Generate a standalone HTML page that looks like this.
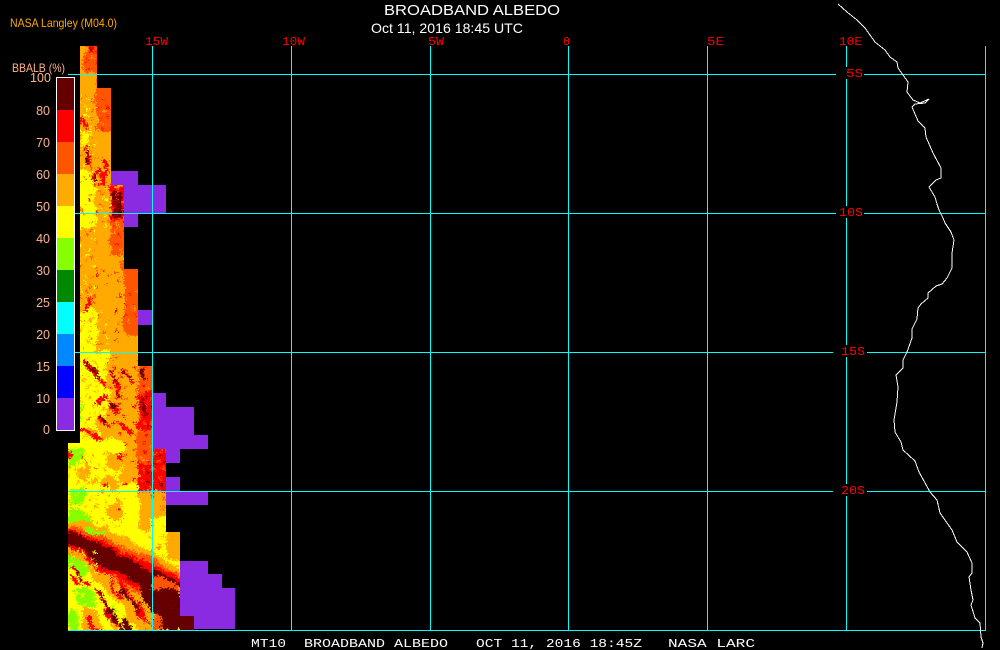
<!DOCTYPE html>
<html lang="en"><head><meta charset="utf-8"><title>Broadband Albedo</title>
<style>html,body{margin:0;padding:0;background:#000;width:1000px;height:650px;overflow:hidden}svg{display:block}
text{font-family:"Liberation Sans",sans-serif}
.r{fill:#ff0000;font-size:12px;font-family:"Liberation Mono",monospace}
.c{fill:#ffb38a;font-size:12.5px;text-anchor:end;font-family:"Liberation Sans",sans-serif}
.f{fill:#fff;font-size:11.5px;font-family:"Liberation Mono",monospace}
</style></head><body>
<svg width="1000" height="650" viewBox="0 0 1000 650" xmlns="http://www.w3.org/2000/svg">
<defs>
<clipPath id="heat"><path d="M80 46H97V88H111V185H124V269H138V366H152V449H166V532H180V616H194V630H68V443H80Z"/></clipPath>
<filter id="n" filterUnits="userSpaceOnUse" x="50" y="30" width="200" height="610" color-interpolation-filters="sRGB">
<feTurbulence type="fractalNoise" baseFrequency="0.07" numOctaves="2" seed="4" result="t1"/>
<feDisplacementMap in="SourceGraphic" in2="t1" scale="12" xChannelSelector="R" yChannelSelector="G" result="d1"/>
<feTurbulence type="fractalNoise" baseFrequency="0.55" numOctaves="1" seed="9" result="t2"/>
<feDisplacementMap in="d1" in2="t2" scale="9" xChannelSelector="G" yChannelSelector="R"/>
</filter>
<pattern id="sy" width="28" height="28" patternUnits="userSpaceOnUse"><path fill="#ffaa00" d="M2 3h3v2h-3zM12 1h2v3h-2zM20 6h4v2h-4zM6 12h2v2h-2zM16 14h3v3h-3zM25 17h2v2h-2zM3 22h4v1h-4zM11 24h2v2h-2zM21 23h2v3h-2z"/><path fill="#ff5500" d="M8 6h1v2h-1zM17 15h1v1h-1zM24 12h2v1h-2zM13 19h1v2h-1zM4 26h2v1h-2z"/><path fill="#f00" d="M22 2h1v1h-1zM9 17h1v1h-1zM1 14h1v1h-1z"/></pattern>
<pattern id="sa" width="28" height="28" patternUnits="userSpaceOnUse"><path fill="#ffff00" d="M1 2h3v2h-3zM10 5h2v2h-2zM19 1h2v3h-2zM24 9h2v2h-2zM5 14h3v2h-3zM15 12h2v1h-2zM21 19h3v2h-3zM2 23h2v3h-2zM12 21h3v2h-3z"/><path fill="#ff5500" d="M6 4h2v3h-2zM15 7h3v2h-3zM1 9h2v2h-2zM10 16h3v3h-3zM25 14h2v2h-2zM17 24h3v2h-3zM7 25h2v2h-2z"/><path fill="#f00" d="M7 5h1v1h-1zM16 8h1v1h-1zM11 17h1v1h-1zM18 25h1v1h-1z"/></pattern>
<pattern id="so" width="28" height="28" patternUnits="userSpaceOnUse"><path fill="#f00" d="M3 2h2v3h-2zM12 6h3v2h-3zM22 3h2v2h-2zM7 13h2v3h-2zM18 15h3v2h-3zM2 21h3v2h-3zM12 23h2v3h-2zM24 22h2v2h-2z"/><path fill="#ffaa00" d="M8 1h3v2h-3zM17 9h2v3h-2zM26 11h2v2h-2zM1 10h3v2h-3zM13 18h2v2h-2zM20 25h3v2h-3zM6 25h2v2h-2z"/></pattern>
<pattern id="sr" width="28" height="28" patternUnits="userSpaceOnUse"><path fill="#ff5500" d="M1 1h4v3h-4zM11 4h4v3h-4zM21 1h3v4h-3zM6 11h4v3h-4zM17 12h5v2h-5zM2 20h3v4h-3zM12 19h3v5h-3zM23 21h4v3h-4z"/><path fill="#600" d="M7 3h2v3h-2zM19 7h2v2h-2zM12 14h2v3h-2zM25 14h1v3h-1zM7 22h2v2h-2z"/></pattern>
<pattern id="sl" width="20" height="20" patternUnits="userSpaceOnUse"><path fill="#ffff00" d="M2 2h3v3h-3zM12 1h3v2h-3zM8 8h3v2h-3zM16 11h3v3h-3zM3 14h3v3h-3zM12 16h2v2h-2z"/></pattern>
<pattern id="sb" width="12" height="12" patternUnits="userSpaceOnUse"><path fill="#000" d="M3 2h1v2h-1zM9 7h1v1h-1zM1 9h1v1h-1z"/></pattern>
</defs>
<rect width="1000" height="650" fill="#000"/>
<!-- purple -->
<g fill="#8a2be2" shape-rendering="crispEdges">
<path d="M110 171h28v14h28v28h-28v14h-14v-42h-14z"/>
<path d="M138 310h14v15h-14z"/>
<path d="M152 393h14v14h28v28h14v14h-28v14h-14v-14h-14z"/>
<path d="M166 477h14v14h28v14h-42z"/>
<path d="M180 561h28v13h14v14h13v41h-41v-13h-14z"/>
</g>
<!-- heat map -->
<g clip-path="url(#heat)">
<rect x="60" y="40" width="140" height="595" fill="#ffaa00"/>
<g filter="url(#n)" shape-rendering="crispEdges">
<!-- top columns -->
<rect x="60" y="30" width="40" height="60" fill="#ffaa00"/>
<rect x="84" y="30" width="20" height="44" fill="#ff5500"/>
<rect x="88" y="30" width="16" height="24" fill="#f00"/><rect x="88" y="30" width="16" height="24" fill="url(#sr)"/>
<rect x="84" y="56" width="20" height="18" fill="url(#so)"/>
<rect x="60" y="88" width="36" height="42" fill="#ffaa00"/><rect x="60" y="92" width="36" height="38" fill="url(#sa)"/>
<rect x="96" y="80" width="20" height="50" fill="#ff5500"/><rect x="96" y="100" width="20" height="30" fill="url(#so)"/>
<rect x="60" y="130" width="36" height="41" fill="#ffaa00"/><rect x="60" y="130" width="36" height="41" fill="url(#sa)"/>
<rect x="78" y="132" width="12" height="16" fill="#ffff00"/><rect x="78" y="132" width="12" height="16" fill="url(#sy)"/>
<rect x="96" y="130" width="20" height="55" fill="#ffaa00"/>
<rect x="60" y="171" width="36" height="56" fill="#ffff00"/><rect x="60" y="171" width="36" height="56" fill="url(#sa)"/>
<rect x="96" y="171" width="14" height="14" fill="#ffaa00"/><rect x="96" y="171" width="14" height="14" fill="url(#so)"/>
<rect x="96" y="185" width="14" height="42" fill="#ffaa00"/><rect x="96" y="185" width="14" height="42" fill="url(#sa)"/>
<rect x="110" y="185" width="20" height="70" fill="#ff5500"/><rect x="110" y="185" width="20" height="70" fill="url(#so)"/>
<rect x="110" y="185" width="20" height="32" fill="#f00"/><rect x="110" y="185" width="20" height="32" fill="url(#sr)"/>
<rect x="60" y="227" width="50" height="28" fill="#ffaa00"/><rect x="60" y="227" width="36" height="28" fill="url(#sa)"/>
<rect x="60" y="255" width="36" height="55" fill="#ffaa00"/><rect x="60" y="255" width="36" height="55" fill="url(#sa)"/>
<rect x="96" y="255" width="28" height="55" fill="#ffaa00"/><rect x="96" y="265" width="14" height="25" fill="url(#so)"/>
<rect x="110" y="227" width="14" height="28" fill="#ff5500"/><rect x="110" y="227" width="14" height="28" fill="url(#so)"/>
<rect x="110" y="255" width="14" height="44" fill="#ffaa00"/><rect x="110" y="270" width="14" height="29" fill="url(#so)"/>
<rect x="124" y="260" width="20" height="82" fill="#ff5500"/><rect x="124" y="290" width="20" height="30" fill="url(#so)"/>
<rect x="60" y="310" width="36" height="42" fill="#ffff00"/><rect x="60" y="310" width="36" height="42" fill="url(#sy)"/>
<rect x="96" y="310" width="14" height="42" fill="#ffaa00"/><rect x="96" y="310" width="14" height="42" fill="url(#sa)"/>
<rect x="110" y="299" width="14" height="53" fill="#ffaa00"/><rect x="110" y="310" width="14" height="32" fill="url(#so)"/>
<rect x="124" y="338" width="20" height="28" fill="#ffaa00"/>
<!-- mid -->
<rect x="60" y="352" width="64" height="97" fill="#ffff00"/><rect x="60" y="352" width="64" height="97" fill="url(#sy)"/>
<path fill="#ffaa00" d="M108 352h16v97h-16zM98 420h14v29h-14zM85 428h10v20h-10z"/>
<rect x="108" y="352" width="16" height="97" fill="url(#so)"/>
<rect x="124" y="366" width="14" height="83" fill="#ffaa00"/><rect x="124" y="366" width="14" height="83" fill="url(#so)"/>
<rect x="138" y="360" width="18" height="92" fill="#ff5500"/><rect x="138" y="360" width="18" height="92" fill="url(#so)"/>
<rect x="136" y="392" width="20" height="38" fill="#f00"/><rect x="136" y="392" width="20" height="38" fill="url(#sr)"/>
<path fill="#88ff00" d="M76 405h6v18h-6z"/>
<g fill="none" stroke-linecap="round">
<path stroke="#f00" stroke-width="4" d="M86 148l5 16M98 168l-5 14M106 170l-6 14M84 120l3 6M90 300l-4 10M106 160l-2 8M87 362l6 10M92 366l8 12M100 378l6 6M112 374l6 12M116 388l4 8M110 404l8 8M96 402l8-4M122 372l8 8M102 418l8 8M84 430l8 8M120 426l10 6M92 434l10 6"/>
<path stroke="#600" stroke-width="1.7" d="M86 150l4 14M99 170l-4 12M88 362l5 8M94 366l6 10M112 374l5 10M116 390l3 5M110 404l6 6M122 372l6 6M103 418l6 6"/>
<path stroke="#600" stroke-width="4" d="M114 190l1 24M119 192l1 22"/>
<path stroke="#600" stroke-width="3" d="M142 371l6 8M143 398l1 18"/>
</g>
<!-- lower yellow -->
<rect x="60" y="440" width="64" height="95" fill="#ffff00"/><rect x="60" y="452" width="64" height="78" fill="url(#sy)"/>
<rect x="124" y="449" width="14" height="83" fill="#ffff00"/>
<rect x="124" y="445" width="14" height="40" fill="#ffaa00"/><rect x="124" y="445" width="14" height="40" fill="url(#so)"/>
<rect x="138" y="452" width="14" height="82" fill="#ffaa00"/>
<rect x="138" y="466" width="16" height="26" fill="#f00"/><rect x="138" y="466" width="16" height="26" fill="url(#sr)"/>
<rect x="138" y="449" width="14" height="17" fill="#ff5500"/><rect x="138" y="449" width="14" height="17" fill="url(#so)"/>
<rect x="152" y="440" width="20" height="50" fill="#f00"/><rect x="152" y="440" width="20" height="50" fill="url(#sr)"/>
<rect x="152" y="490" width="20" height="18" fill="#ffaa00"/><rect x="152" y="490" width="20" height="18" fill="url(#sr)"/>
<rect x="152" y="508" width="20" height="26" fill="#ffff00"/><rect x="152" y="508" width="20" height="26" fill="url(#sy)"/>
<rect x="152" y="508" width="20" height="10" fill="#ffaa00"/>
<path fill="#88ff00" d="M70 446h14v16l-10 4h-6zM70 488h14v18h-14zM68 512l14-2 10 10 4 10-10 2-18-6z"/>
<path fill="#ffaa00" d="M100 478l14-2 8 8-4 5-18-3zM74 470h14l-2 8h-10zM112 503h8l4 12-6 6-10-5-3-8zM108 452h8l4 12-5 8-6-8zM92 476h6v6h-6zM120 450h6v30h-6zM86 465l6 2-2 4-4-1z"/>
<path fill="#f00" d="M118 510h3v3h-3zM116 453h5v7h-5zM80 458h3v2h-3zM103 484h3v3h-3zM69 448h3v10h-3z"/>
<rect x="70" y="446" width="14" height="60" fill="url(#sl)" opacity=".5"/>
<!-- bottom -->
<rect x="60" y="530" width="120" height="105" fill="#ffff00"/>
<rect x="166" y="526" width="20" height="34" fill="#ffaa00"/>
<rect x="152" y="534" width="14" height="34" fill="url(#sy)"/>
<path fill="#ffaa00" d="M112 534h14l10 12-12-2zM60 520h24l36 18 36 16 26 20v12l-40-16-46-20-36-18z"/>
<path fill="#88ff00" d="M84 528h12l8 6-6 4zM98 548l12 6 8 6-12-2z"/>
<path fill="#ff5500" d="M60 526h18l30 14 46 20 30 18v8l-30-12-50-20-44-18z"/>
<path fill="#f00" d="M60 529l20 3 26 11 46 21 30 15v6l-30-8-46-16-46-26z"/>
<!-- halo under main band -->
<path fill="#ffaa00" d="M60 546l14 2 14 10 14 16 20 8 20 14 12 10v26h-16l-16-24-20-22-16-16-26-14z"/>
<path fill="url(#sr)" d="M66 546l14 2 14 10 14 16 20 8 20 14 6 6v26h-10l-14-24-22-22-18-14-24-12z"/>
<path fill="#ff5500" d="M88 552l14 12 20 8 22 16 10 6v12l-22-16-18-10-14-12z"/>
<!-- main band -->
<path fill="#f00" d="M60 531l20 2 20 8 17 9 17 8 20 12v24l-13-2-20-13-20-6-18-16-23-14z"/>
<path fill="#600" d="M60 533l19 2 20 8 17 9 17 8 21 13v18l-11-3-20-14-20-6-17-15-26-11z"/>
<path fill="#600" d="M153 568l27 14v5l-27-13z"/>
<path fill="#f00" d="M153 574l27 13v3l-27-10z"/>
<path fill="#ff5500" d="M153 578h12l15 8v6h-27z"/>
<path fill="#600" d="M136 580l18 8 26 2 4 40h-24l-6-16-10-12-4-16z"/>
<path fill="#ff5500" d="M154 612l6 4 2 14h-8z"/>
<!-- lower stripes -->
<path fill="#88ff00" d="M68 554l12 6 8 12-2 4-10-4-10-8zM74 590l14-2 8 10-4 10-12-2zM110 606l6 6 4 8-6-2zM70 610h8v20h-8zM92 560l6 6-3 2z"/>
<rect x="68" y="552" width="32" height="60" fill="url(#sl)"/>
<path fill="#ffaa00" d="M84 606l12 8 8 16h-22zM112 618l10 8 2 4h-12z"/>
<g fill="none" stroke-linecap="round">
<path stroke="#f00" stroke-width="4" d="M74 568l8 10 6 6M70 578l8 6M96 590l6 8 6 10 8 12 6 10M86 618l8 8 4 4M116 574l8 14 8 12 8 14"/>
<path stroke="#600" stroke-width="2.4" d="M97 591l6 8 6 10 8 12 5 9M76 570l7 9"/>
<path stroke="#f00" stroke-width="3" d="M104 572l8 14 10 12M140 604l4 14"/>
<path stroke="#600" stroke-width="5" d="M126 620l2 10"/>
<path stroke="#600" stroke-width="3" d="M122 590l10 12 6 8"/>
</g>
</g>
</g>
<g shape-rendering="crispEdges">
<rect x="180" y="616" width="14" height="14" fill="#600"/>
<rect x="153" y="592" width="27" height="38" fill="url(#sb)"/>
</g>
<!-- grid -->
<g fill="#00ffff" shape-rendering="crispEdges">
<rect x="152" y="46" width="1" height="584"/><rect x="291" y="46" width="1" height="584"/>
<rect x="430" y="46" width="1" height="584"/><rect x="568" y="46" width="1" height="584"/>
<rect x="707" y="46" width="1" height="584"/><rect x="846" y="46" width="1" height="584"/>
<rect x="985" y="46" width="1" height="584"/>
<rect x="68" y="74" width="918" height="1"/><rect x="68" y="213" width="918" height="1"/>
<rect x="68" y="352" width="918" height="1"/><rect x="68" y="491" width="918" height="1"/>
<rect x="68" y="630" width="918" height="1"/>
</g>
<g fill="#000" shape-rendering="crispEdges">
<rect x="836" y="67" width="28" height="12"/><rect x="836" y="206" width="28" height="12"/>
<rect x="833" y="345" width="34" height="12"/><rect x="833" y="484" width="34" height="12"/>
</g>
<!-- coast -->
<polyline fill="none" stroke="#fff" stroke-width="1" shape-rendering="crispEdges" points="838,4 847,12 857,20 865,28 875,42 885,50 890,57 897,62 898,68 903,75 908,82 907,92 913,100 920,103 929,99 925,103 915,104 912,107 918,121 925,128 926,137 933,153 941,168 941,178 936,180 929,187 935,197 937,204 939,210 943,218 945,223 951,232 954,240 952,253 952,268 947,278 942,284 936,286 928,293 928,298 921,304 918,308 917,319 912,329 912,338 907,352 903,360 903,368 896,375 898,387 897,402 896,408 894,420 895,432 901,442 903,450 915,461 919,472 930,492 937,500 940,513 952,530 957,542 967,552 972,563 972,573 969,577 971,590 973,600 971,605 975,618 980,623 981,637 983,643 982,648"/>
<!-- colorbar -->
<g shape-rendering="crispEdges">
<rect x="56" y="77" width="19" height="354" fill="#fff"/>
<rect x="57" y="78" width="17" height="32" fill="#660000"/>
<rect x="57" y="110" width="17" height="32" fill="#ff0000"/>
<rect x="57" y="142" width="17" height="32" fill="#ff5500"/>
<rect x="57" y="174" width="17" height="32" fill="#ffaa00"/>
<rect x="57" y="206" width="17" height="32" fill="#ffff00"/>
<rect x="57" y="238" width="17" height="32" fill="#88ff00"/>
<rect x="57" y="270" width="17" height="32" fill="#008800"/>
<rect x="57" y="302" width="17" height="32" fill="#00ffff"/>
<rect x="57" y="334" width="17" height="32" fill="#0088ff"/>
<rect x="57" y="366" width="17" height="32" fill="#0000ff"/>
<rect x="57" y="398" width="17" height="32" fill="#8a2be2"/>
</g>
<text class="c" x="51" y="82" textLength="21" lengthAdjust="spacing">100</text>
<text class="c" x="50" y="115">80</text><text class="c" x="50" y="147">70</text>
<text class="c" x="50" y="179">60</text><text class="c" x="50" y="211">50</text>
<text class="c" x="50" y="243">40</text><text class="c" x="50" y="275">30</text>
<text class="c" x="50" y="307">25</text><text class="c" x="50" y="339">20</text>
<text class="c" x="50" y="371">15</text><text class="c" x="50" y="403">10</text>
<text class="c" x="50" y="434">0</text>
<text x="12" y="72" fill="#ffb38a" font-size="12" textLength="53" lengthAdjust="spacingAndGlyphs">BBALB (%)</text>
<text x="10" y="27" fill="#ffaa00" font-size="12" textLength="107" lengthAdjust="spacingAndGlyphs">NASA Langley (M04.0)</text>
<text x="384" y="15" fill="#fff" font-size="15" textLength="176" lengthAdjust="spacingAndGlyphs">BROADBAND ALBEDO</text>
<text x="371" y="33" fill="#fff" font-size="14" textLength="152" lengthAdjust="spacingAndGlyphs">Oct 11, 2016 18:45 UTC</text>
<!-- axis labels -->
<text class="r" x="145" y="45" textLength="23" lengthAdjust="spacingAndGlyphs">15W</text>
<text class="r" x="282" y="45" textLength="23" lengthAdjust="spacingAndGlyphs">10W</text>
<text class="r" x="428" y="45" textLength="16" lengthAdjust="spacingAndGlyphs">5W</text>
<text class="r" x="563" y="45" textLength="7" lengthAdjust="spacingAndGlyphs">0</text>
<text class="r" x="707" y="45" textLength="17" lengthAdjust="spacingAndGlyphs">5E</text>
<text class="r" x="839" y="45" textLength="23" lengthAdjust="spacingAndGlyphs">10E</text>
<text class="r" x="846" y="77" textLength="17" lengthAdjust="spacingAndGlyphs">5S</text>
<text class="r" x="839" y="216" textLength="24" lengthAdjust="spacingAndGlyphs">10S</text>
<text class="r" x="841" y="355" textLength="24" lengthAdjust="spacingAndGlyphs">15S</text>
<text class="r" x="841" y="494" textLength="24" lengthAdjust="spacingAndGlyphs">20S</text>
<!-- footer -->
<text class="f" x="251" y="647" textLength="35" lengthAdjust="spacingAndGlyphs">MT10</text>
<text class="f" x="304" y="647" textLength="144" lengthAdjust="spacingAndGlyphs">BROADBAND ALBEDO</text>
<text class="f" x="476" y="647" textLength="166" lengthAdjust="spacingAndGlyphs">OCT 11, 2016 18:45Z</text>
<text class="f" x="668" y="647" textLength="87" lengthAdjust="spacingAndGlyphs">NASA LARC</text>
</svg>
</body></html>
